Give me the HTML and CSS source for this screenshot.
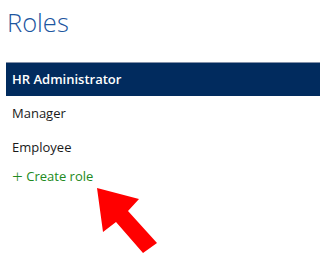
FILE: index.html
```html
<!DOCTYPE html>
<html lang="en">
<head>
  <meta charset="UTF-8" />
  <title>Roles</title>
  <link rel="stylesheet" href="styles.css">
</head>
<body>
  <div class="page">
    <h1 class="page-title">Roles</h1>
    <ul class="role-list">
      <li class="role-item selected">HR Administrator</li>
      <li class="role-item">Manager</li>
      <li class="role-item">Employee</li>
    </ul>
    <a href="#" class="create-role"><span class="plus">+</span> Create role</a>
  </div>

  <svg class="callout-arrow" width="75" height="80" viewBox="0 0 75 80">
    <polygon points="7,8 49,19 38,31 67,63 53,73 26,42 13,52" fill="#ff0000" />
  </svg>
</body>
</html>
```

FILE: styles.css
```css
html, body {
  margin: 0;
  background: #fff;
  font-family: "Open Sans", "Noto Sans", sans-serif;
}
.page {
  padding: 0 8px 0 6px;
}
.page-title {
  margin: 0;
  padding: 5px 0 0 1px;
  height: 62px;
  box-sizing: border-box;
  font-size: 25.5px;
  font-weight: 300;
  line-height: 34px;
  color: #1c56a0;
}
.role-list {
  list-style: none;
  margin: 0;
  padding: 0;
}
.role-item {
  height: 34px;
  line-height: 34px;
  padding-left: 6px;
  font-size: 13px;
  color: #1a1a1a;
}
.role-item.selected {
  background: #012b5e;
  color: #fff;
  font-weight: 600;
  border-top: 1px solid #8391a9;
  height: 33px;
  line-height: 33px;
}
.create-role {
  display: block;
  height: 18px;
  line-height: 18px;
  padding-left: 6px;
  margin-top: 3px;
  font-size: 13px;
  color: #218a21;
  text-decoration: none;
}
.plus {
  display: inline-block;
  font-size: 19px;
  font-weight: 300;
  line-height: 18px;
  vertical-align: top;
}
.callout-arrow {
  position: absolute;
  left: 90px;
  top: 180px;
}
```
